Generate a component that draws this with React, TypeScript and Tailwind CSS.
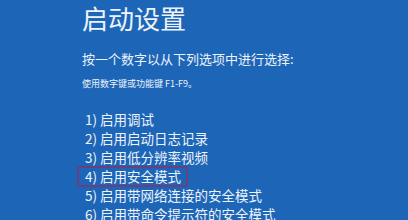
const options = [
  '1) 启用调试',
  '2) 启用启动日志记录',
  '3) 启用低分辨率视频',
  '4) 启用安全模式',
  '5) 启用带网络连接的安全模式',
  '6) 启用带命令提示符的安全模式',
];

export default function App() {
  return (
    <div
      className="h-[220px] w-[408px] overflow-hidden bg-[#1d66b7] pl-[82px] text-[#eef3fb]"
      style={{ fontFamily: '"Noto Sans CJK SC", "Noto Sans", sans-serif' }}
    >
      <h1 className="pt-[2px] text-[26px] font-normal leading-[32px]">启动设置</h1>
      <p className="mt-[16px] text-[13px] leading-[18px]">按一个数字以从下列选项中进行选择:</p>
      <p className="mt-[10px] text-[9px] leading-[12px]">使用数字键或功能键 F1-F9。</p>
      <ul className="mt-[20px] flex flex-col">
        {options.map((item, i) => (
          <li key={i} className="relative h-[19px] pl-[3px] text-[13.5px] leading-[19px]">
            {i === 3 && (
              <span className="absolute left-[-5px] top-[-1px] h-[21px] w-[111px] rounded-[2px] border-2 border-[#6a3f80]" />
            )}
            {item}
          </li>
        ))}
      </ul>
    </div>
  );
}
